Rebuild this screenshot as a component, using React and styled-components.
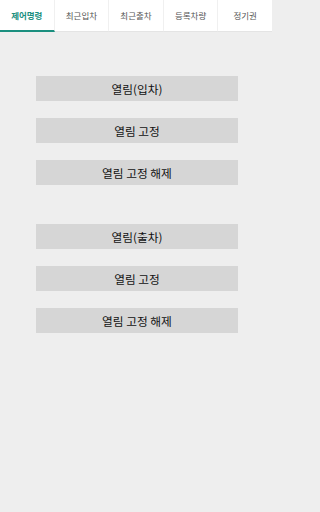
import styled, { createGlobalStyle } from "styled-components";

const GlobalStyle = createGlobalStyle`
  html, body {
    margin: 0;
    padding: 0;
    background: #eeeeee;
  }
  body {
    font-family: "Noto Sans CJK KR", "Noto Sans", sans-serif;
  }
`;

const Page = styled.div`
  width: 100%;
  max-width: 272px;
  min-height: 512px;
  background: #eeeeee;
`;

const TabBar = styled.nav`
  display: flex;
  height: 32px;
  background: #ffffff;
  border-bottom: 1px solid #e4e4e4;
  box-sizing: border-box;
`;

const Tab = styled.div`
  flex: 1;
  display: flex;
  align-items: center;
  justify-content: center;
  font-size: 8.5px;
  color: ${({ $active }) => ($active ? "#1b8f7f" : "#555555")};
  font-weight: ${({ $active }) => ($active ? 700 : 400)};
  border-bottom: 2px solid ${({ $active }) => ($active ? "#1b8f7f" : "transparent")};
  border-right: 1px solid #f0f0f0;
  margin-bottom: -1px;

  &:last-child {
    border-right: none;
  }
`;

const Content = styled.div`
  display: flex;
  flex-direction: column;
  padding: 44px 34px 0 36px;
  gap: 39px;
`;

const Group = styled.div`
  display: flex;
  flex-direction: column;
  gap: 17px;
`;

const Button = styled.button`
  height: 25px;
  border: none;
  background: #d6d6d6;
  color: #111111;
  font-family: "Noto Sans CJK KR", "Noto Sans", sans-serif;
  font-size: 11.7px;
  padding: 0;
  cursor: pointer;
`;

const tabs = ["제어명령", "최근입차", "최근출차", "등록차량", "정기권"];

function ControlGroup({ title }) {
  return (
    <Group>
      <Button>{title}</Button>
      <Button>열림 고정</Button>
      <Button>열림 고정 해제</Button>
    </Group>
  );
}

export default function App() {
  return (
    <Page>
      <GlobalStyle />
      <TabBar>
        {tabs.map((t, i) => (
          <Tab key={t} $active={i === 0}>
            {t}
          </Tab>
        ))}
      </TabBar>
      <Content>
        <ControlGroup title="열림(입차)" />
        <ControlGroup title="열림(출차)" />
      </Content>
    </Page>
  );
}
